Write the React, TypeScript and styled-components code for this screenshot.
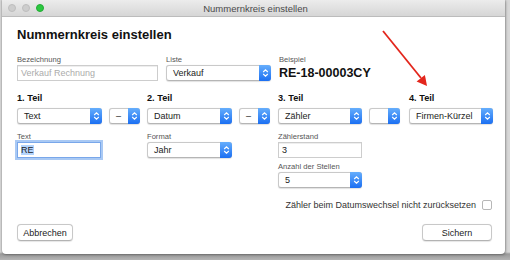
import React from 'react';
import styled, { createGlobalStyle } from 'styled-components';

const GlobalStyle = createGlobalStyle`
  body {
    margin: 0;
    font-family: "Liberation Sans", Arial, sans-serif;
    color: #222;
  }
`;

const Desk = styled.div`
  position: relative;
  width: 510px;
  height: 260px;
  overflow: hidden;
  background: linear-gradient(to bottom, #d8d8d8 0, #d8d8d8 252px, #9a9a9a 254px, #b4b4b4 260px);
  padding-left: 2px;
  box-sizing: border-box;
`;

const Window = styled.div`
  width: 503px;
  height: 254px;
  background: #fff;
  display: flex;
  flex-direction: column;
  box-shadow: 0 0 2px rgba(0, 0, 0, 0.45), 1px 1px 3px rgba(0, 0, 0, 0.2);
  border-radius: 0 0 4px 4px;
`;

const TitleBar = styled.div`
  height: 16px;
  display: grid;
  grid-template-columns: 1fr auto 1fr;
  align-items: center;
  background: linear-gradient(to bottom, #ececec, #d6d6d6);
  border-bottom: 1px solid #bcbcbc;
`;

const Lights = styled.div`
  display: flex;
  gap: 6px;
  padding-left: 6px;
`;

const Light = styled.span<{ $on?: boolean }>`
  width: 8px;
  height: 8px;
  border-radius: 50%;
  box-sizing: border-box;
  background: ${(p) => (p.$on ? '#2bc840' : '#cdcdcd')};
  border: 1px solid ${(p) => (p.$on ? '#22ab35' : '#bebebe')};
`;

const WindowTitle = styled.span`
  font-size: 9.5px;
  color: #4a4a4a;
  margin-left: 4px;
`;

const Body = styled.div`
  flex: 1;
  display: flex;
  flex-direction: column;
  padding: 10px 13px 12px 15px;
`;

const Heading = styled.h1`
  margin: 0;
  font-size: 13px;
  line-height: 16px;
  font-weight: bold;
  color: #111;
`;

const TopRow = styled.div`
  display: flex;
  gap: 8px;
  margin-top: 12px;
`;

const Field = styled.div<{ $gap?: number }>`
  display: flex;
  flex-direction: column;
  gap: 1px;
  margin-top: ${(p) => p.$gap ?? 0}px;
`;

const Label = styled.label`
  font-size: 7.6px;
  line-height: 9px;
  color: #555;
`;

const Example = styled.div`
  font-size: 12.5px;
  line-height: 15px;
  font-weight: bold;
  color: #111;
  margin-top: 1px;
`;

const TextInput = styled.div<{ $w: number; $focus?: boolean; $placeholder?: boolean }>`
  width: ${(p) => p.$w}px;
  height: 16px;
  box-sizing: border-box;
  border: 1px solid ${(p) => (p.$focus ? '#79a7ea' : '#cdcdcd')};
  box-shadow: ${(p) => (p.$focus ? '0 0 0 2px #a9c9f4' : 'inset 0 1px 0 #eee')};
  display: flex;
  align-items: center;
  padding-left: 3px;
  font-size: 9px;
  color: ${(p) => (p.$placeholder ? '#ababab' : '#222')};
  background: #fff;
`;

const Selected = styled.span`
  background: #b3d4fc;
`;

const Popup = styled.div<{ $w: number }>`
  width: ${(p) => p.$w}px;
  height: 16px;
  box-sizing: border-box;
  display: flex;
  align-items: stretch;
  border: 1px solid #c9c9c9;
  border-bottom-color: #b5b5b5;
  border-radius: 3px;
  background: #fff;
  box-shadow: 0 0.5px 1px rgba(0, 0, 0, 0.12);
  font-size: 9px;
`;

const PopupText = styled.span`
  flex: 1;
  display: flex;
  align-items: center;
  padding-left: 6px;
  white-space: nowrap;
  overflow: hidden;
`;

const Stepper = styled.span`
  width: 12px;
  margin: -1px -1px -1px 0;
  border-radius: 0 3px 3px 0;
  background: linear-gradient(to bottom, #66aefc, #1b6ff2);
  display: flex;
  align-items: center;
  justify-content: center;
`;

const PartGrid = styled.div`
  display: grid;
  grid-template-columns: 130px 131px 131px 1fr;
  margin-top: 12px;
`;

const PartCol = styled.div`
  display: flex;
  flex-direction: column;
`;

const PartTitle = styled.div`
  font-size: 9.2px;
  line-height: 11px;
  font-weight: bold;
  color: #111;
`;

const PartSelects = styled.div`
  display: flex;
  gap: 7px;
  margin-top: 4px;
`;

const CheckRow = styled.div`
  display: flex;
  justify-content: flex-end;
  align-items: center;
  gap: 6px;
  margin-top: 12px;
  font-size: 9px;
  color: #333;
`;

const Checkbox = styled.span`
  width: 10px;
  height: 10px;
  box-sizing: border-box;
  border: 1px solid #b7b7b7;
  border-radius: 2px;
  background: #fff;
`;

const Buttons = styled.div`
  display: flex;
  justify-content: space-between;
  margin-top: 14px;
`;

const Button = styled.button<{ $w: number }>`
  width: ${(p) => p.$w}px;
  height: 17px;
  padding: 0;
  border: 1px solid #c8c8c8;
  border-bottom-color: #b3b3b3;
  border-radius: 4px;
  background: #fff;
  font-family: inherit;
  font-size: 9px;
  color: #222;
  box-shadow: 0 0.5px 1px rgba(0, 0, 0, 0.1);
`;

const Arrow = styled.svg`
  position: absolute;
  left: 0;
  top: 0;
  pointer-events: none;
`;

const StepIcon = () => (
  <svg width="7" height="10" viewBox="0 0 7 10">
    <path d="M1.2 4 L3.5 1.8 L5.8 4 M1.2 6 L3.5 8.2 L5.8 6" fill="none" stroke="#fff" strokeWidth="1.1" />
  </svg>
);

const Select = ({ w, value }: { w: number; value: string }) => (
  <Popup $w={w}>
    <PopupText>{value}</PopupText>
    <Stepper>
      <StepIcon />
    </Stepper>
  </Popup>
);

const App: React.FunctionComponent = () => {
  return (
    <Desk>
      <GlobalStyle />
      <Window>
        <TitleBar>
          <Lights>
            <Light />
            <Light />
            <Light $on />
          </Lights>
          <WindowTitle>Nummernkreis einstellen</WindowTitle>
          <span />
        </TitleBar>
        <Body>
          <Heading>Nummernkreis einstellen</Heading>
          <TopRow>
            <Field>
              <Label>Bezeichnung</Label>
              <TextInput $w={141} $placeholder>Verkauf Rechnung</TextInput>
            </Field>
            <Field>
              <Label>Liste</Label>
              <Select w={105} value="Verkauf" />
            </Field>
            <Field>
              <Label>Beispiel</Label>
              <Example>RE-18-00003CY</Example>
            </Field>
          </TopRow>

          <PartGrid>
            <PartCol>
              <PartTitle>1. Teil</PartTitle>
              <PartSelects>
                <Select w={85} value="Text" />
                <Select w={31} value="–" />
              </PartSelects>
              <Field $gap={8}>
                <Label>Text</Label>
                <TextInput $w={84} $focus>
                  <Selected>RE</Selected>
                </TextInput>
              </Field>
            </PartCol>
            <PartCol>
              <PartTitle>2. Teil</PartTitle>
              <PartSelects>
                <Select w={85} value="Datum" />
                <Select w={31} value="–" />
              </PartSelects>
              <Field $gap={8}>
                <Label>Format</Label>
                <Select w={85} value="Jahr" />
              </Field>
            </PartCol>
            <PartCol>
              <PartTitle>3. Teil</PartTitle>
              <PartSelects>
                <Select w={84} value="Zähler" />
                <Select w={31} value="" />
              </PartSelects>
              <Field $gap={8}>
                <Label>Zählerstand</Label>
                <TextInput $w={84}>3</TextInput>
              </Field>
              <Field $gap={4}>
                <Label>Anzahl der Stellen</Label>
                <Select w={84} value="5" />
              </Field>
            </PartCol>
            <PartCol>
              <PartTitle>4. Teil</PartTitle>
              <PartSelects>
                <Select w={84} value="Firmen-Kürzel" />
              </PartSelects>
            </PartCol>
          </PartGrid>

          <CheckRow>
            <span>Zähler beim Datumswechsel nicht zurücksetzen</span>
            <Checkbox />
          </CheckRow>

          <Buttons>
            <Button $w={56}>Abbrechen</Button>
            <Button $w={70}>Sichern</Button>
          </Buttons>
        </Body>
      </Window>
      <Arrow width="510" height="260" viewBox="0 0 510 260">
        <line x1="383" y1="31" x2="421" y2="78" stroke="#e3261c" strokeWidth="1.8" />
        <polygon points="427,86 416.6,81.5 424.9,75" fill="#e3261c" />
      </Arrow>
    </Desk>
  );
};

export default App;
